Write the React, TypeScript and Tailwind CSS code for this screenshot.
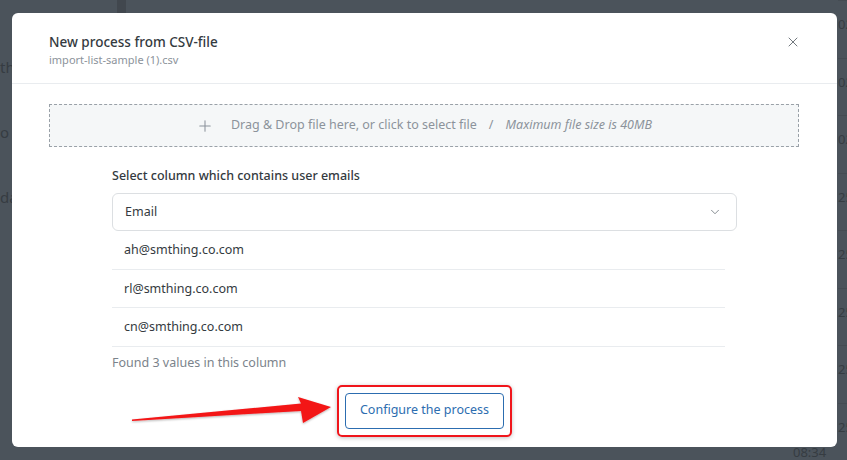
import React from 'react';
import { X, ChevronDown, Plus } from 'lucide-react';

const emails = ['ah@smthing.co.com', 'rl@smthing.co.com', 'cn@smthing.co.com'];

const BgRows = () => (
  <div className="absolute inset-0 overflow-hidden bg-[#4b535b]">
    {/* dimmed app behind the overlay */}
    <div className="absolute left-[117px] top-0 h-[13px] w-[9px] bg-[#41474e]" />
    <div className="absolute left-[0px] top-[56px] text-[15px] text-[#363c42]">th</div>
    <div className="absolute left-[0px] top-[121px] text-[15px] text-[#363c42]">o c</div>
    <div className="absolute left-[0px] top-[186px] text-[15px] text-[#363c42]">da</div>
    <div className="absolute left-[838px] top-0 flex w-[20px] flex-col">
      {['02', '02', '02', '25', '25', '25', '25', '25'].map((t, i) => (
        <div key={i} className="h-[57.5px] border-t border-[#454c53] pt-[14px] text-[13px] text-[#363c42]">
          {t}
        </div>
      ))}
    </div>
    <div className="absolute left-[793px] top-[443px] text-[13px] text-[#363c42]">08:34</div>
  </div>
);

export default function App() {
  return (
    <div
      className="relative h-[460px] w-[847px] overflow-hidden"
      style={{ fontFamily: '"Noto Sans", "Open Sans", sans-serif' }}
    >
      <BgRows />
      <div className="relative pl-3 pt-[13px]">
        <div className="flex h-[434px] w-[825px] flex-col rounded-md bg-white">
          {/* Header */}
          <div className="flex h-[71px] items-start justify-between border-b border-[#e9ecef] pl-[37px] pr-[36px] pt-[19px]">
            <div className="flex flex-col">
              <span className="text-[13.5px] font-medium leading-[20px] text-[#343a40]">New process from CSV-file</span>
              <span className="text-[11px] leading-[16px] text-[#8c939b]">import-list-sample (1).csv</span>
            </div>
            <X className="mt-[2px] h-[16px] w-[16px] text-[#5c636a]" strokeWidth={1.3} />
          </div>

          {/* Body */}
          <div className="flex flex-col px-[37px] pt-[20px]">
            <div className="flex h-[43px] w-[750px] items-center justify-center border border-dashed border-[#9aa1a8] bg-[#f5f7f8] text-[12.5px] text-[#8c939b]">
              <Plus className="mr-[17px] h-[18px] w-[18px]" strokeWidth={1.4} />
              <span>Drag &amp; Drop file here, or click to select file</span>
              <span className="px-[12px]">/</span>
              <span className="italic">Maximum file size is 40MB</span>
            </div>

            <div className="flex flex-col pl-[63px] pt-[20px]">
              <label className="text-[12.5px] font-medium leading-[18px] text-[#343a40]">
                Select column which contains user emails
              </label>
              <div className="mt-[8px] flex h-[38px] w-[625px] items-center justify-between rounded-md border border-[#dcdfe2] pl-[12px] pr-[14px] text-[12.5px] text-[#343a40]">
                <span>Email</span>
                <ChevronDown className="h-[14px] w-[14px] text-[#6c737a]" strokeWidth={1.4} />
              </div>
              <div className="flex w-[613px] flex-col">
                {emails.map((e) => (
                  <div key={e} className="flex h-[38.5px] items-center border-b border-[#e9ecef] pl-[12px] pt-[2px] text-[12.5px] text-[#343a40]">
                    {e}
                  </div>
                ))}
              </div>
              <span className="mt-[7px] text-[12.5px] leading-[18px] text-[#7b838b]">Found 3 values in this column</span>
            </div>

            <div className="mt-[13px] flex justify-center">
              <div className="rounded-[5px] border-2 border-[#f0151b] p-[6px] shadow-[0_1px_4px_rgba(0,0,0,0.25)]">
                <button className="h-[36px] rounded-[4px] border border-[#2c6db0] px-[14px] text-[12.5px] text-[#2c6db0]">
                  Configure the process
                </button>
              </div>
            </div>
          </div>
        </div>
      </div>

      {/* annotation arrow */}
      <svg className="absolute left-0 top-0" width="847" height="460">
        <defs>
          <filter id="sh" x="-10%" y="-50%" width="120%" height="200%">
            <feDropShadow dx="0" dy="1" stdDeviation="1.2" floodOpacity="0.3" />
          </filter>
        </defs>
        <polygon
          filter="url(#sh)"
          fill="#f31417"
          points="132,419.5 301,403.5 298,397 331,407 303,423 301,411 132,421"
        />
      </svg>
    </div>
  );
}
